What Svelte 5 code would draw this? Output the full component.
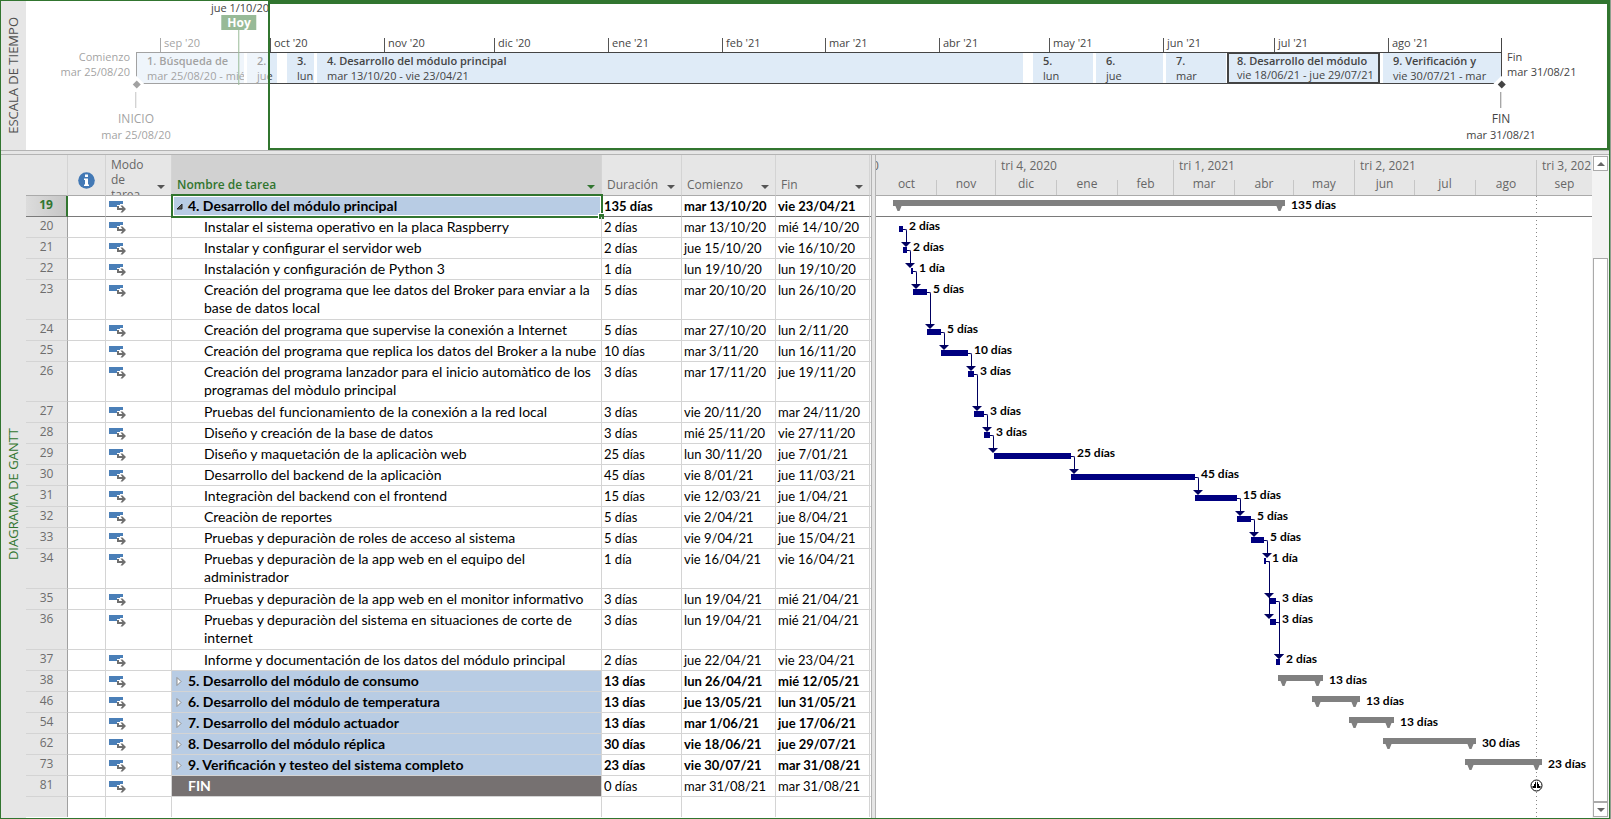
<script>
  // Timeline positions are measured on a 1583-unit wide canvas.
  const TL = 1583;
  const tl = (x) => `${(x / TL) * 100}%`;

  const ticks = [
    [134, "sep '20"], [244, "oct '20"], [358, "nov '20"], [468, "dic '20"],
    [582, "ene '21"], [696, "feb '21"], [799, "mar '21"], [913, "abr '21"],
    [1023, "may '21"], [1137, "jun '21"], [1248, "jul '21"], [1362, "ago '21"]
  ];

  const phases = [
    { x: 111, w: 107, title: '1. Búsqueda de', dates: 'mar 25/08/20 - mié' },
    { x: 221, w: 30, title: '2.', dates: 'jue' },
    { x: 261, w: 27, title: '3.', dates: 'lun' },
    { x: 291, w: 706, title: '4. Desarrollo del módulo principal', dates: 'mar 13/10/20 - vie 23/04/21' },
    { x: 1007, w: 60, title: '5.', dates: 'lun' },
    { x: 1070, w: 67, title: '6.', dates: 'jue' },
    { x: 1140, w: 60, title: '7.', dates: 'mar' },
    { x: 1201, w: 153, title: '8. Desarrollo del módulo', dates: 'vie 18/06/21 - jue 29/07/21', selected: true },
    { x: 1357, w: 119, title: '9. Verificación y', dates: 'vie 30/07/21 - mar' }
  ];

  // Gantt chart positions are measured on a 716-unit wide canvas.
  const GW = 716;
  const gp = (x) => `${(x / GW) * 100}%`;

  const quarters = [
    [119, ''], [178, 'tri 4, 2020'], [181, 'tri 1, 2021'], [182, 'tri 2, 2021'], [56, 'tri 3, 202']
  ];
  const months = [
    [60, 'oct'], [59, 'nov'], [61, 'dic'], [61, 'ene'], [56, 'feb'], [61, 'mar'],
    [59, 'abr'], [61, 'may'], [60, 'jun'], [61, 'jul'], [61, 'ago'], [56, 'sep']
  ];

  // x0/x1: bar ends; link: length of the connector that leaves the bar
  const tasks = [
    { id: 19, name: '4. Desarrollo del módulo principal', dur: '135 días', start: 'mar 13/10/20', end: 'vie 23/04/21', kind: 'summary', open: true, x0: 17, x1: 409 },
    { id: 20, name: 'Instalar el sistema operativo en la placa Raspberry', dur: '2 días', start: 'mar 13/10/20', end: 'mié 14/10/20', x0: 23, x1: 27, link: 12 },
    { id: 21, name: 'Instalar y configurar el servidor web', dur: '2 días', start: 'jue 15/10/20', end: 'vie 16/10/20', x0: 27, x1: 31, link: 12 },
    { id: 22, name: 'Instalación y configuración de Python 3', dur: '1 día', start: 'lun 19/10/20', end: 'lun 19/10/20', x0: 35, x1: 37, link: 12 },
    { id: 23, name: 'Creación del programa que lee datos del Broker para enviar a la\nbase de datos local', dur: '5 días', start: 'mar 20/10/20', end: 'lun 26/10/20', x0: 37, x1: 51, tall: true, link: 31 },
    { id: 24, name: 'Creación del programa que supervise la conexión a Internet', dur: '5 días', start: 'mar 27/10/20', end: 'lun 2/11/20', x0: 51, x1: 65, link: 12 },
    { id: 25, name: 'Creación del programa que replica los datos del Broker a la nube', dur: '10 días', start: 'mar 3/11/20', end: 'lun 16/11/20', x0: 65, x1: 92, link: 12 },
    { id: 26, name: 'Creación del programa lanzador para el inicio automàtico de los\nprogramas del mòdulo principal', dur: '3 días', start: 'mar 17/11/20', end: 'jue 19/11/20', x0: 92, x1: 98, tall: true, link: 31 },
    { id: 27, name: 'Pruebas del funcionamiento de la conexión a la red local', dur: '3 días', start: 'vie 20/11/20', end: 'mar 24/11/20', x0: 98, x1: 108, link: 12 },
    { id: 28, name: 'Diseño y creación de la base de datos', dur: '3 días', start: 'mié 25/11/20', end: 'vie 27/11/20', x0: 108, x1: 114, link: 12 },
    { id: 29, name: 'Diseño y maquetación de la aplicaciòn web', dur: '25 días', start: 'lun 30/11/20', end: 'jue 7/01/21', x0: 118, x1: 195, link: 12 },
    { id: 30, name: 'Desarrollo del backend de la aplicaciòn', dur: '45 días', start: 'vie 8/01/21', end: 'jue 11/03/21', x0: 195, x1: 319, link: 12 },
    { id: 31, name: 'Integraciòn del backend con el frontend', dur: '15 días', start: 'vie 12/03/21', end: 'jue 1/04/21', x0: 319, x1: 361, link: 12 },
    { id: 32, name: 'Creaciòn de reportes', dur: '5 días', start: 'vie 2/04/21', end: 'jue 8/04/21', x0: 361, x1: 375, link: 12 },
    { id: 33, name: 'Pruebas y depuraciòn de roles de acceso al sistema', dur: '5 días', start: 'vie 9/04/21', end: 'jue 15/04/21', x0: 375, x1: 388, link: 12 },
    { id: 34, name: 'Pruebas y depuraciòn de la app web en el equipo del\nadministrador', dur: '1 día', start: 'vie 16/04/21', end: 'vie 16/04/21', x0: 388, x1: 390, tall: true, link: 31, also: 52 },
    { id: 35, name: 'Pruebas y depuraciòn de la app web en el monitor informativo', dur: '3 días', start: 'lun 19/04/21', end: 'mié 21/04/21', x0: 394, x1: 400, link: 52 },
    { id: 36, name: 'Pruebas y depuraciòn del sistema en situaciones de corte de\ninternet', dur: '3 días', start: 'lun 19/04/21', end: 'mié 21/04/21', x0: 394, x1: 400, tall: true, link: 31 },
    { id: 37, name: 'Informe y documentación de los datos del módulo principal', dur: '2 días', start: 'jue 22/04/21', end: 'vie 23/04/21', x0: 400, x1: 404 },
    { id: 38, name: '5. Desarrollo del módulo de consumo', dur: '13 días', start: 'lun 26/04/21', end: 'mié 12/05/21', kind: 'summary', x0: 402, x1: 447 },
    { id: 46, name: '6. Desarrollo del módulo de temperatura', dur: '13 días', start: 'jue 13/05/21', end: 'lun 31/05/21', kind: 'summary', x0: 436, x1: 484 },
    { id: 54, name: '7. Desarrollo del módulo actuador', dur: '13 días', start: 'mar 1/06/21', end: 'jue 17/06/21', kind: 'summary', x0: 473, x1: 518 },
    { id: 62, name: '8. Desarrollo del módulo réplica', dur: '30 días', start: 'vie 18/06/21', end: 'jue 29/07/21', kind: 'summary', x0: 507, x1: 600 },
    { id: 73, name: '9. Verificación y testeo del sistema completo', dur: '23 días', start: 'vie 30/07/21', end: 'mar 31/08/21', kind: 'summary', x0: 589, x1: 666 },
    { id: 81, name: 'FIN', dur: '0 días', start: 'mar 31/08/21', end: 'mar 31/08/21', kind: 'milestone', x0: 660 }
  ];
</script>

{#snippet arrow(label)}
  <button class="filter" aria-label={label}><svg width="8" height="4" viewBox="0 0 8 4"><path d="M0 0H8L4 4Z" fill="currentColor" /></svg></button>
{/snippet}

<div class="app">
  <section class="timeline">
    <h2 class="side"><span>ESCALA DE TIEMPO</span></h2>
    <div class="canvas">
      {#each ticks as [x, label]}
        <div class="tick" style:left={tl(x)}>{label}</div>
      {/each}
      <div class="band" style:left={tl(110)} style:width={tl(1366)}></div>
      {#each phases as p}
        <div class="phase" class:selected={p.selected} style:left={tl(p.x)} style:width={tl(p.w)}>
          <b>{p.title}</b><span>{p.dates}</span>
        </div>
      {/each}
      <div class="edge start" style:right={tl(TL - 104)}>Comienzo<br />mar 25/08/20</div>
      <div class="edge" style:left={tl(1481)}>Fin<br />mar 31/08/21</div>
      <div class="post" style:left={tl(110)}></div>
      <div class="post last" style:left={tl(1475)}></div>
      {#each [[110, 'INICIO', 'mar 25/08/20'], [1475, 'FIN', 'mar 31/08/21']] as [x, name, date]}
        <div class="mark" style:left={tl(x)}>
          <svg width="16" height="16" viewBox="0 0 16 16"><path d="M8 0L16 8L8 16L0 8Z" fill="#fff" /><path d="M8.500 4.500L12.500 8.500L8.500 12.500L4.500 8.500Z" fill="#444" /></svg>
          <i></i>
          <strong>{name}</strong>
          <span>{date}</span>
        </div>
      {/each}
      <div class="today" style:left={tl(213)}><b>Hoy</b><i></i></div>
      <div class="veil" style:width={tl(242)}></div>
      <div class="until" style:right={tl(TL - 243)}>jue 1/10/20</div>
      <div class="window" style:left={tl(242)}></div>
    </div>
  </section>

  <div class="splitter"></div>

  <section class="gantt">
    <h2 class="side green"><span>DIAGRAMA DE GANTT</span></h2>
    <div class="sheet">
      <table>
        <colgroup>
          <col class="c-id" /><col class="c-info" /><col class="c-mode" /><col class="c-name" />
          <col class="c-dur" /><col class="c-date" /><col class="c-date" /><col />
        </colgroup>
        <thead>
          <tr>
            <th aria-label="Número"></th>
            <th class="info" aria-label="Información">
              <svg width="17" height="17" viewBox="0 0 17 17"><circle cx="8.500" cy="8.500" r="8.300" fill="#4379b5" /><path d="M7 2.500h3v2.500H7zM6 6.500h4v6h1v1.500H6v-1.500h1V8H6z" fill="#fff" /></svg>
            </th>
            <th class="mode"><span>Modo<br />de<br />tarea</span>{@render arrow('Filtrar modo de tarea')}</th>
            <th class="name">Nombre de tarea{@render arrow('Filtrar nombre')}</th>
            <th>Duración{@render arrow('Filtrar duración')}</th>
            <th>Comienzo{@render arrow('Filtrar comienzo')}</th>
            <th>Fin{@render arrow('Filtrar fin')}</th>
            <th class="rest"></th>
          </tr>
        </thead>
        <tbody>
          {#each tasks as t}
            <tr class={t.kind} class:current={t.open} class:tall={t.tall}>
              <td class="id">{t.id}</td>
              <td></td>
              <td class="icon">
                <svg width="17" height="12" viewBox="0 0 17 12"><path d="M0 0H14V3H11V4H8V6H0Z" fill="#4a7fb8" /><path d="M9 5V8H11.500M11 8H15" fill="none" stroke="#6f6f6f" stroke-width="2" /><path d="M11.500 4.500H13.500L17 8L13.500 11.500H11.500L14 8Z" fill="#6f6f6f" /></svg>
              </td>
              <td class="task">
                {#if t.kind === 'summary'}
                  <svg class="toggle" width="7" height="9" viewBox="0 0 7 9">
                    {#if t.open}<path d="M6 2V7H1Z" fill="#555" stroke="#222" />{:else}<path d="M1 .5L5 4.500L1 8.500Z" fill="#fff" stroke="#8a8a8a" />{/if}
                  </svg>
                {/if}
                {t.name}
                {#if t.open}<div class="cursor"></div>{/if}
              </td>
              <td>{t.dur}</td>
              <td>{t.start}</td>
              <td>{t.end}</td>
              <td class="rest"></td>
            </tr>
          {/each}
          <tr class="blank"><td class="id"></td><td></td><td></td><td></td><td></td><td></td><td></td><td class="rest"></td></tr>
        </tbody>
      </table>
    </div>
    <div class="divider"></div>
    <div class="chart">
      <div class="scale">
        <span class="cut">0</span>
        <div class="tier">
          {#each quarters as [w, label]}<div class="quarter" style:width={gp(w)}>{label}</div>{/each}
        </div>
        <div class="tier">
          {#each months as [w, label]}<div class="month" style:width={gp(w)}>{label}</div>{/each}
        </div>
      </div>
      <div class="rows">
        <div class="deadline" style:left={gp(660)}></div>
        {#each tasks as t}
          <div class="row" class:tall={t.tall} class:current={t.open}>
            {#if t.kind === 'summary'}
              <div class="sum" style:left={gp(t.x0)} style:width={gp(t.x1 - t.x0)}>
                <svg width="11" height="11" viewBox="0 0 11 11"><path d="M0 0H11L6.500 11H4.500Z" fill="#808080" /></svg>
                <svg width="11" height="11" viewBox="0 0 11 11"><path d="M0 0H11L6.500 11H4.500Z" fill="#808080" /></svg>
              </div>
            {:else if t.kind === 'milestone'}
              <svg class="stone" style:left={gp(t.x0)} width="13" height="13" viewBox="0 0 13 13"><circle cx="6.500" cy="6.500" r="5.500" fill="#fff" stroke="#000" /><path d="M6 2.500V9H2.500V7H4V5H5V3.500zM7 2.500V9H10.500V7H9V5H8V3.500z" fill="#000" /></svg>
            {:else}
              <div class="bar" style:left={gp(t.x0)} style:width={gp(t.x1 - t.x0)}></div>
            {/if}
            {#if t.link}
              <div class="link" style:left={gp(t.x1)} style:height="{t.link}px"></div>
            {/if}
            {#if t.also}
              <div class="link" style:left={gp(t.x1)} style:height="{t.also}px"></div>
            {/if}
            {#if t.x1}<span class="label" style:left={gp(t.x1)}>{t.dur}</span>{/if}
          </div>
        {/each}
      </div>
    </div>
    <div class="scroll">
      <button aria-label="Subir"><svg width="8" height="4" viewBox="0 0 8 4"><path d="M0 4H8L4 0Z" fill="#666" /></svg></button>
      <div class="track"><div class="thumb"></div></div>
      <button aria-label="Bajar"><svg width="8" height="4" viewBox="0 0 8 4"><path d="M0 0H8L4 4Z" fill="#666" /></svg></button>
    </div>
  </section>
</div>

<style>
  :global(body) { background: #8fa08f; }
  .app {
    --green: #31752f;
    --grey: #e6e6e6;
    --line: #d4d4d4;
    box-sizing: border-box;
    display: flex;
    flex-direction: column;
    min-height: 100vh;
    margin-right: 1px;
    border: 1px solid var(--green);
    background: #fff;
    color: #444;
    font: 11px/15px 'Open Sans', 'Noto Sans', sans-serif;
  }
  .side {
    box-sizing: border-box;
    flex: none;
    display: flex;
    align-items: center;
    justify-content: center;
    width: 25px;
    margin: 0;
    background: var(--grey);
    color: #505050;
    font-size: 13px;
    font-weight: 500;
  }
  .side span { writing-mode: vertical-rl; transform: rotate(180deg); white-space: nowrap; }
  .side.green { padding-top: 16px; color: var(--green); }

  .timeline { display: flex; height: 149px; }
  .canvas { position: relative; flex: 1; min-width: 0; overflow: hidden; white-space: nowrap; }
  .canvas > div { position: absolute; }
  .tick { top: 37px; height: 14px; padding-left: 3px; border-left: 1px solid #555; line-height: 9px; }
  .band { box-sizing: border-box; top: 51px; height: 32px; border: solid #444; border-width: 1px 0; }
  .phase { box-sizing: border-box; top: 52px; height: 30px; padding-left: 10px; overflow: hidden; background: #dfebf7; }
  .phase b, .phase span { display: block; }
  .phase b { font-weight: 600; }
  .phase.selected { top: 51px; height: 32px; padding: 0 0 0 8px; border: 2px solid #444; line-height: 14px; }
  .edge { top: 48px; }
  .edge.start { text-align: right; }
  .post { top: 51px; width: 1px; height: 28px; background: #444; }
  .post.last { top: 37px; height: 42px; }
  .mark { top: 75px; display: flex; flex-direction: column; align-items: center; transform: translateX(-50%); }
  .mark i { width: 1px; height: 16px; background: #888; }
  .mark strong { margin-top: 3px; font-size: 12px; font-weight: 400; }
  .mark span { margin-top: 1px; }
  .today { top: 14px; display: flex; flex-direction: column; align-items: center; transform: translateX(-50%); }
  .today b { padding: 0 6px; background: var(--green); color: #fff; font-size: 12px; }
  .today i { width: 1px; height: 55px; background: var(--green); }
  .veil { top: 0; bottom: 0; left: 0; background: rgb(255 255 255 / 50%); }
  .until { top: -1px; }
  .window { top: -1px; right: 0; bottom: 0; border: 2px solid var(--green); border-top-width: 4px; }

  .splitter { height: 3px; border: solid #b4b4b4; border-width: 1px 0; background: var(--grey); }

  .gantt { display: flex; flex: 1; }
  .sheet { flex: none; width: 845px; background: #fff; }
  table { width: 100%; table-layout: fixed; border-spacing: 0; color: #000; font: 13px/18px Lato, sans-serif; }
  .c-id { width: 42px; }
  .c-info { width: 38px; }
  .c-mode { width: 66px; }
  .c-name { width: 430px; }
  .c-dur { width: 80px; }
  .c-date { width: 94px; }
  th {
    position: relative;
    box-sizing: border-box;
    height: 41px;
    padding: 0 0 2px 5px;
    border: solid var(--line);
    border-width: 0 1px 1px 0;
    border-bottom-color: #aaa;
    background: var(--grey);
    color: #666;
    font: 12px/16px 'Open Sans', sans-serif;
    text-align: left;
    vertical-align: bottom;
  }
  th.name { background: #d1d1d1; color: var(--green); font-weight: 600; }
  th.name .filter { color: var(--green); }
  th.info { padding: 0 0 6px 10px; line-height: 0; }
  th.mode { padding: 0 0 0 5px; }
  th.mode span { display: block; height: 38px; overflow: hidden; line-height: 15px; }
  .filter { position: absolute; right: 6px; bottom: 6px; padding: 0; border: 0; background: none; color: #555; line-height: 0; }
  td { padding: 1px 0 1px 2px; border: solid var(--line); border-width: 0 1px 1px 0; white-space: pre; vertical-align: top; }
  .rest { border-right: 0; padding: 0; }
  td.id { padding: 0; border-right-color: #a0a0a0; background: var(--grey); color: #6d6d6d; font: 12px/18px 'Open Sans', sans-serif; text-align: center; }
  td.icon { padding: 5px 0 0 3px; line-height: 0; }
  td.task { position: relative; padding-left: 32px; font-size: 14px; white-space: pre-line; }
  tr.tall { height: 40px; }
  .summary td, .milestone .task { font-weight: 700; }
  .summary td.id { font-weight: 400; }
  .summary .task, .milestone .task { padding-left: 16px; background: #b8cce4; }
  .milestone .task { background: #767171; color: #fff; }
  .toggle { position: absolute; top: 6px; left: 4px; }
  .current td { border-bottom-color: #7a7a7a; }
  .current td.id { border-right: 2px solid var(--green); background: linear-gradient(90deg, #dcdcdc, #c6c6c6); color: var(--green); font-weight: 700; }
  .cursor { position: absolute; inset: -2px -2px -2px -1px; border: 2px solid var(--green); box-shadow: inset 0 0 0 1px #fff; }
  .cursor::after { content: ''; position: absolute; right: -3px; bottom: -3px; width: 5px; height: 5px; border: 1px solid #fff; border-width: 1px 0 0 1px; background: var(--green); }
  .blank td { height: 18px; border-bottom: 0; }

  .divider { flex: none; width: 3px; border: solid #b4b4b4; border-width: 0 1px; background: var(--grey); }

  .chart { display: flex; flex: 1; flex-direction: column; min-width: 0; overflow: hidden; }
  .scale { position: relative; box-sizing: border-box; height: 41px; padding-top: 5px; border-bottom: 1px solid #aaa; background: var(--grey); color: #666; font-size: 12px; line-height: 11px; }
  .cut { position: absolute; top: 5px; left: -4px; }
  .tier { display: flex; }
  .tier > div { box-sizing: border-box; flex: none; border-left: 1px solid #c6c6c6; white-space: nowrap; }
  .tier > div:first-child { border-left-color: transparent; }
  .quarter { height: 20px; padding-left: 5px; }
  .month { height: 15px; line-height: 7px; text-align: center; }
  .rows { position: relative; flex: 1; }
  .deadline { position: absolute; top: 0; bottom: 0; width: 1px; background: repeating-linear-gradient(#888 0 1px, transparent 1px 4px); }
  .row { position: relative; box-sizing: border-box; height: 21px; }
  .row.tall { height: 40px; }
  .row.current { border-bottom: 1px solid #7a7a7a; }
  .bar { position: absolute; top: 9px; height: 6px; background: #000080; }
  .sum { position: absolute; top: 4px; display: flex; justify-content: space-between; height: 11px; background: linear-gradient(#808080 6px, transparent 6px); }
  .stone { position: absolute; top: 3px; margin-left: -6px; }
  .link { position: absolute; z-index: 1; top: 12px; width: 3px; border: solid #000060; border-width: 1px 1px 0 0; border-top-right-radius: 2px; }
  .link::after { content: ''; position: absolute; right: -5px; bottom: -5px; border: solid transparent; border-width: 5px 5px 0; border-top-color: #000060; }
  .label { position: absolute; top: 0; margin-left: 6px; color: #000; font: 700 12px/18px Lato, sans-serif; white-space: nowrap; }

  .scroll { display: flex; flex: none; flex-direction: column; width: 15px; padding: 1px; background: #f3f3f3; }
  .scroll button { box-sizing: border-box; height: 15px; padding: 0; border: 1px solid #aaa; background: #fff; line-height: 8px; }
  .scroll svg { display: block; margin: auto; }
  .track { flex: 1; display: flex; padding-top: 87px; }
  .thumb { flex: 1; border: 1px solid #aaa; background: #fff; }
</style>
